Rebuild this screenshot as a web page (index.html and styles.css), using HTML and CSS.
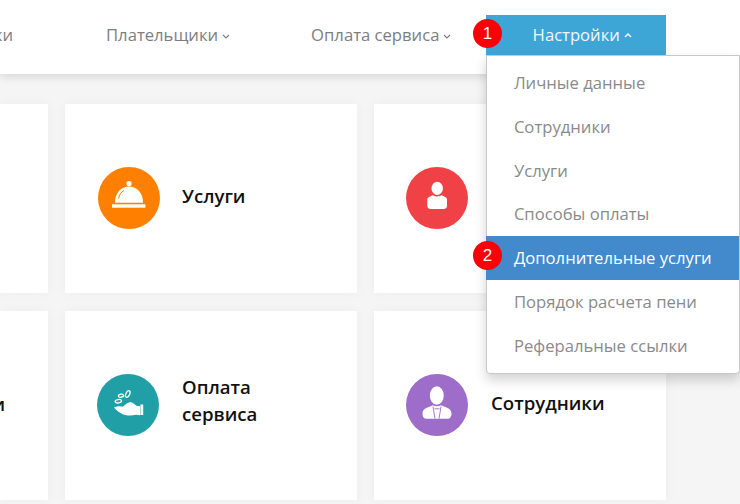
FILE: index.html
```html
<!DOCTYPE html>
<html lang="ru">
<head>
<meta charset="utf-8">
<title>Настройки</title>
<link rel="stylesheet" href="styles.css">
</head>
<body>
<div class="page">
  <header class="topbar">
    <a class="nav-item nav-first">Счетчики</a>
    <a class="nav-item nav-payers">Плательщики<svg class="chev" viewBox="0 0 8 5"><path d="M1 1l3 3 3-3"/></svg></a>
    <a class="nav-item nav-pay">Оплата сервиса<svg class="chev" viewBox="0 0 8 5"><path d="M1 1l3 3 3-3"/></svg></a>
    <div class="nav-settings">
      <span class="badge badge-one">1</span>
      <a class="nav-active">Настройки<svg class="chev chev-up" viewBox="0 0 8 5"><path d="M1 4l3-3 3 3"/></svg></a>
      <ul class="menu">
        <li class="menu-item">Личные данные</li>
        <li class="menu-item">Сотрудники</li>
        <li class="menu-item">Услуги</li>
        <li class="menu-item">Способы оплаты</li>
        <li class="menu-item menu-item-on"><span class="badge badge-two">2</span>Дополнительные услуги</li>
        <li class="menu-item">Порядок расчета пени</li>
        <li class="menu-item">Реферальные ссылки</li>
      </ul>
    </div>
  </header>
  <main class="grid">
    <section class="card card-cut"></section>
    <section class="card card-wide">
      <svg class="icon" viewBox="0 0 62 62">
        <circle cx="31" cy="31" r="31" fill="#ff7f00"/>
        <circle cx="31" cy="16.6" r="2.6" fill="#fff"/>
        <path d="M17 35.7C17 26 23 19.6 31 19.6S45 26 45 35.7z" fill="#fff"/>
        <path d="M20.5 31.5c.6-3.6 2.6-6.4 5.5-8" fill="none" stroke="#ff7f00" stroke-width="1"/>
        <rect x="14" y="37.3" width="33.4" height="3.4" fill="#fff"/>
      </svg>
      <h2 class="card-title">Услуги</h2>
    </section>
    <section class="card">
      <svg class="icon" viewBox="0 0 62 62">
        <circle cx="31" cy="31" r="31" fill="#f04146"/>
        <ellipse cx="31.2" cy="21.4" rx="5.7" ry="6.6" fill="#fff"/>
        <path d="M21.3 32.5c0-2.2 3-3.4 5.7-4.3 2.4 1.6 6 1.6 8.3 0 2.800.9 5.700 2.100 5.700 4.300v6.500c0 2-1.500 3-3.500 3H25c-2.200 0-3.700-1-3.700-3z" fill="#fff"/>
      </svg>
    </section>
    <section class="card card-cut">
      <h2 class="card-title cut-title">Счетчики</h2>
    </section>
    <section class="card">
      <svg class="icon" viewBox="0 0 62 62">
        <circle cx="31" cy="31" r="31" fill="#20a0a6"/>
        <g fill="none" stroke="#fff" stroke-width="1.300">
          <ellipse cx="21.300" cy="27.200" rx="3.200" ry="1.700" transform="rotate(-10 21.300 27.200)"/>
          <ellipse cx="24" cy="21.700" rx="2.600" ry="1.500" transform="rotate(-10 24 21.700)"/>
          <ellipse cx="30.800" cy="20" rx="1.900" ry="3.500" transform="rotate(25 30.800 20)"/>
        </g>
        <path d="M17 33.500c3.500-1.600 6-1.600 9-.8 1.800-1.600 3.800-3.200 6-4.200 2.500-.9 5 .9 7.500 3.300l3.500.5v9l-3.500-.5c-3.500.7-7 1-10 .5-4-.7-9-3.500-12.500-7.800z" fill="#fff"/>
        <rect x="43.400" y="30.500" width="2.800" height="10.500" fill="#fff"/>
      </svg>
      <h2 class="card-title title-two">Оплата<br>сервиса</h2>
    </section>
    <section class="card">
      <svg class="icon" viewBox="0 0 62 62">
        <circle cx="31" cy="31" r="31" fill="#9e6cc9"/>
        <ellipse cx="30.800" cy="21.500" rx="7" ry="9.200" fill="#fff"/>
        <path d="M16.500 40c0-4 2-5.500 5-6.500l5.500-2.300c2 1.500 5.500 1.500 8 0l5.500 2.300c3 1 5 2.500 5 6.500 0 3-1.500 4.700-4 4.700H20.500c-2.500 0-4-1.700-4-4.700z" fill="#fff"/>
        <path d="M27 32.500l2 12.200M35 32.500l-2 12.200M28.500 34.800h5" fill="none" stroke="#9e6cc9" stroke-width=".9"/>
      </svg>
      <h2 class="card-title">Сотрудники</h2>
    </section>
  </main>
</div>
</body>
</html>
```
FILE: styles.css
```css
* {
  box-sizing: border-box;
}
html,
body {
  margin: 0;
  height: 100%;
}
body {
  background: #f5f5f5;
  font-family: "Open Sans", "Liberation Sans", sans-serif;
  overflow: hidden;
}
.page {
  width: 740px;
  height: 504px;
  overflow: hidden;
}
.topbar {
  position: relative;
  z-index: 2;
  display: flex;
  align-items: flex-start;
  height: 74px;
  padding-top: 15px;
  background: #fff;
  box-shadow: 0 2px 10px rgba(0, 0, 0, 0.14);
}
.nav-item {
  display: flex;
  align-items: center;
  gap: 4px;
  height: 40px;
  padding-bottom: 1px;
  font-size: 16.65px;
  color: #7d7d84;
  white-space: nowrap;
}
.nav-first {
  width: 70px;
  margin-left: -57px;
  justify-content: flex-end;
}
.nav-payers {
  margin-left: 93px;
}
.nav-pay {
  margin-left: 81px;
}
.chev {
  width: 8px;
  height: 5px;
  margin-top: 3px;
  fill: none;
  stroke: currentColor;
  stroke-width: 1.1;
}
.chev-up {
  stroke-width: 1.5;
}
.nav-settings {
  position: relative;
  flex: none;
  width: 180px;
  height: 40px;
  margin-left: 34.5px;
  background: #3da6d6;
}
.nav-active {
  display: flex;
  align-items: center;
  justify-content: flex-end;
  gap: 4px;
  height: 40px;
  padding: 0 34px 2px 0;
  font-size: 16.65px;
  color: #f2f8fb;
  white-space: nowrap;
}
.badge {
  position: absolute;
  left: -13px;
  display: flex;
  align-items: center;
  justify-content: center;
  width: 29px;
  height: 29px;
  border-radius: 50%;
  background: #fb0007;
  color: #fff;
  font-family: "Liberation Sans", sans-serif;
  font-size: 17px;
  z-index: 3;
}
.badge-one {
  top: 4px;
}
.badge-two {
  top: 5px;
}
.menu {
  position: absolute;
  top: 40px;
  left: 0;
  width: 254px;
  height: 319px;
  margin: 0;
  padding: 4px 0 0;
  list-style: none;
  background: #fff;
  border: 1px solid #c8c8c8;
  border-radius: 0 0 4px 4px;
  box-shadow: 0 6px 12px rgba(0, 0, 0, 0.175);
}
.menu-item {
  position: relative;
  display: flex;
  align-items: center;
  height: 44px;
  margin-left: -1px;
  padding: 0 0 0 28px;
  font-size: 16.65px;
  color: #8a8a8a;
  white-space: nowrap;
}
.menu-item:nth-child(n + 4) {
  padding-bottom: 1px;
}
.menu-item-on {
  background: #428acb;
  color: #fff;
}
.grid {
  display: grid;
  grid-template-columns: 48px 292px 292px;
  grid-template-rows: 189px 189px;
  gap: 18px 17px;
  padding-top: 30px;
}
.card {
  display: flex;
  align-items: center;
  gap: 23px;
  padding: 0 0 2px 32px;
  background: #fff;
  box-shadow: 0 0 12px rgba(0, 0, 0, 0.04);
}
.card-wide {
  padding-left: 33px;
  gap: 22px;
}
.card-cut {
  padding: 0 43px 0 0;
  justify-content: flex-end;
  overflow: hidden;
}
.icon {
  flex: none;
  width: 62px;
  height: 62px;
}
.card-title {
  margin: 0;
  padding-bottom: 5px;
  font-size: 18.6px;
  font-weight: 600;
  line-height: 27px;
  color: #111;
  white-space: nowrap;
}
.title-two {
  padding-bottom: 10px;
}
.cut-title {
  flex: none;
}
```
